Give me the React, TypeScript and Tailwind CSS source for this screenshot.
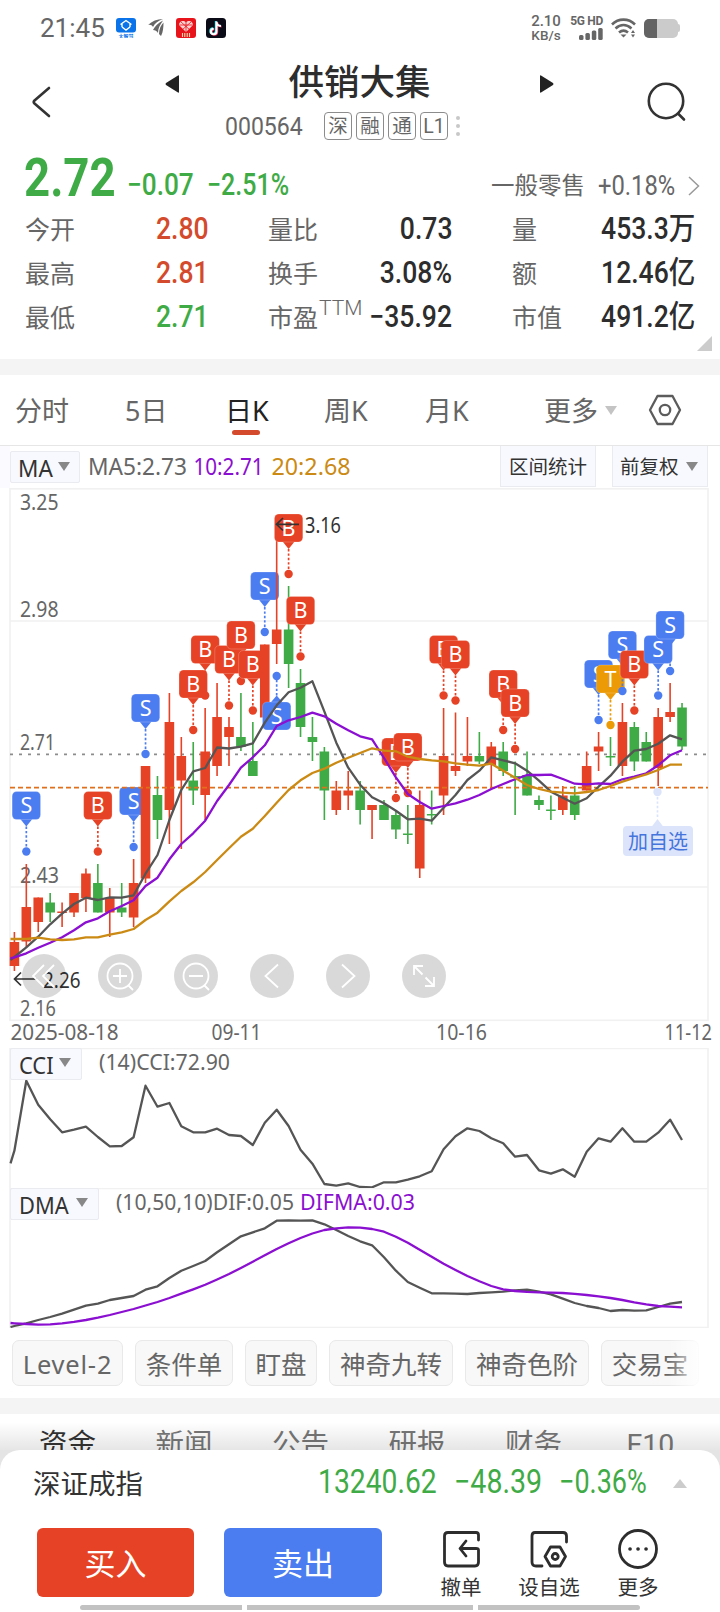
import React from 'react';

const RED = '#e64225';
const GREEN = '#3fab46';
const BLUE = '#4c7df0';
const AMBER = '#ec9a05';

const FIRST_X = 14.4;
const STEP = 11.922;
const xAt = (i: number) => FIRST_X + STEP * i;

interface Candle {
    up: boolean;
    high: number;
    top: number;
    bottom: number;
    low: number;
}

const c = (kind: 'r' | 'g', high: number, top: number, bottom: number, low: number): Candle => ({
    up: kind === 'r', high, top, bottom, low,
});

// chart coordinates: 4.88px per 0.01 yuan
const candles: Candle[] = [
    c('r', 932, 942, 966, 971), c('r', 864, 907, 941.5, 947), c('r', 897.5, 897.5, 922, 932),
    c('g', 893, 902.5, 912.5, 922), c('r', 902.5, 911.5, 913, 927), c('r', 893, 893, 912.5, 917),
    c('r', 868.5, 873.5, 898, 912), c('g', 864, 883, 912.5, 912.5), c('r', 888, 898, 912.5, 937),
    c('g', 883, 907.5, 912.5, 917), c('r', 859, 883, 917.5, 927), c('r', 766, 766, 878.5, 883),
    c('g', 776, 795, 820, 839), c('r', 693, 722, 810, 844), c('r', 737, 756, 780.5, 849),
    c('g', 742, 780.5, 790.5, 805), c('r', 708, 751.5, 795, 820), c('r', 683, 717, 766, 776),
    c('r', 717, 727, 737, 766), c('g', 693, 737, 747, 751), c('g', 722, 761, 776, 776),
    c('r', 644.5, 644.5, 717.5, 717.5), c('r', 526, 629.5, 644, 664), c('g', 586, 629.5, 664, 688),
    c('g', 669, 683, 727, 737), c('g', 717, 737, 742, 761), c('g', 747, 751.5, 790.5, 820),
    c('r', 781, 790.5, 810, 815), c('r', 771, 790.5, 795.5, 810), c('g', 781, 790.5, 810, 824.5),
    c('r', 805, 805, 810, 839), c('g', 800, 805, 820, 820), c('g', 810, 815, 829.5, 839),
    c('g', 805, 833.5, 835, 844), c('r', 790.5, 805, 868.5, 878), c('g', 790.5, 814, 815.5, 824.5),
    c('r', 708, 756, 795.5, 815), c('r', 712.5, 766, 771, 776), c('r', 717, 756, 761.5, 766),
    c('g', 732, 756, 761.5, 764), c('r', 742, 746.5, 765, 788), c('g', 742, 751.5, 771, 776),
    c('g', 761.5, 776, 777.5, 815), c('g', 751.5, 775, 795.5, 795.5), c('g', 795.5, 800, 805, 810),
    c('g', 795.5, 809.5, 811, 820), c('r', 786, 795.5, 810, 815), c('g', 786, 795.5, 815, 820),
    c('r', 751.5, 766, 790.5, 790.5), c('r', 732, 746.5, 751.5, 771), c('g', 737, 756, 757.5, 766),
    c('r', 703, 722, 766, 776), c('g', 722, 727, 761.5, 771), c('g', 732, 742, 761.5, 761.5),
    c('r', 708, 717, 768, 786), c('r', 683, 712, 717, 722), c('g', 703, 707.5, 746.5, 750),
];

interface Signal {
    kind: 'B' | 'S' | 'T';
    y: number;
    below?: boolean;
}

const signals: Record<number, Signal> = {
    1: { kind: 'S', y: 851.5 },
    7: { kind: 'B', y: 851.5 },
    10: { kind: 'S', y: 847 },
    11: { kind: 'S', y: 754 },
    15: { kind: 'B', y: 730 },
    16: { kind: 'B', y: 695.5 },
    18: { kind: 'B', y: 705.5 },
    19: { kind: 'B', y: 681 },
    20: { kind: 'B', y: 710.5 },
    21: { kind: 'S', y: 632 },
    22: { kind: 'S', y: 676, below: true },
    23: { kind: 'B', y: 574 },
    24: { kind: 'B', y: 656.5 },
    32: { kind: 'B', y: 798 },
    33: { kind: 'B', y: 793 },
    36: { kind: 'B', y: 695.5 },
    37: { kind: 'B', y: 700.5 },
    41: { kind: 'B', y: 730 },
    42: { kind: 'B', y: 749 },
    49: { kind: 'S', y: 720 },
    50: { kind: 'T', y: 725 },
    51: { kind: 'S', y: 691 },
    52: { kind: 'B', y: 710.5 },
    54: { kind: 'S', y: 695.5 },
    55: { kind: 'S', y: 671 },
};

const signalColor = { B: RED, S: BLUE, T: AMBER };

const ma5 = [957, 947.3, 936.7, 924.3, 913.7, 904, 897.7, 900, 897.3, 897.7, 895.3, 873.7, 855, 820, 790, 771.3, 768, 747.5, 748.5, 746.7, 743.3, 722.7, 705.3, 692.3, 687.7, 681.3, 711.7, 742.7, 767.7, 784.7, 797.3, 803.3, 810.7, 819.3, 818.7, 820.7, 807.7, 795, 780, 770.7, 757.3, 760.3, 763.3, 770.7, 780.7, 791.7, 797.7, 803.7, 798.3, 786.7, 775.7, 761.7, 750.7, 749, 743.7, 735.3, 739.3];
const ma10 = [957.3, 953.3, 947.7, 942.7, 937.3, 930.3, 922.3, 918.3, 911.3, 906, 900.3, 886, 877.7, 859.3, 844, 833.3, 820.7, 801, 785, 767.7, 757.3, 745.3, 726, 720.3, 717, 712.7, 716.3, 723.7, 730.3, 736.3, 739.3, 758, 777.3, 794, 802, 808.7, 806, 803.3, 799.7, 795, 789, 784, 779.3, 775, 775, 774.7, 779, 783.7, 784.3, 783.3, 784, 779.3, 776.7, 773.3, 765.3, 755.3, 750.3];
const ma20 = [939, 939, 937.7, 939.3, 940, 939.3, 937.3, 937.3, 934.7, 932.3, 929, 920, 912.7, 901.3, 891, 882.3, 872, 860, 848.3, 836.7, 828.7, 816, 802.7, 790, 780.3, 773, 768.7, 762.7, 757.7, 753, 748.3, 750.7, 751.3, 756.7, 759, 760.3, 761.3, 763.3, 764.7, 765.7, 763.7, 770.7, 777.7, 785, 789, 791.7, 792.7, 793.3, 792, 790, 786, 781.7, 778, 774.3, 770, 764.7, 764.7];
const cci = [1150.7, 1080.7, 1104.7, 1119.3, 1132.3, 1129.7, 1126.7, 1137, 1146.3, 1146, 1137.3, 1085.7, 1106.7, 1103, 1126.3, 1132.3, 1132.3, 1128.7, 1135, 1136, 1145, 1122.7, 1109.7, 1126, 1149.7, 1163.7, 1184, 1185.7, 1183.3, 1187, 1187.3, 1182.3, 1182.3, 1179.7, 1176.3, 1171.3, 1149.3, 1136.3, 1128.3, 1131, 1138.3, 1143.3, 1156.7, 1155, 1170.3, 1173.7, 1169.3, 1176.7, 1151.7, 1138.3, 1141.7, 1128.3, 1141.7, 1141.7, 1132.7, 1119.7, 1140];
const dif = [1326, 1323.3, 1320, 1317, 1313.7, 1309.7, 1305.7, 1303.7, 1300, 1298, 1296, 1289.7, 1286.3, 1278, 1270.7, 1266, 1261, 1252.3, 1244.3, 1236.3, 1232.3, 1228.3, 1220.7, 1220.3, 1220.7, 1220.3, 1224.3, 1230, 1236, 1241.3, 1245.3, 1257.3, 1270.7, 1282, 1287.7, 1293.3, 1293.3, 1293.7, 1294, 1293, 1292.3, 1291.7, 1290.3, 1289.7, 1291.7, 1294.3, 1298.7, 1303, 1306, 1308, 1311, 1310, 1310.7, 1310.3, 1307, 1303.7, 1302];
const difma = [1323.3, 1324, 1324.7, 1324.3, 1323.3, 1321.8, 1320, 1317.7, 1315, 1312, 1309, 1305.5, 1302, 1298, 1293.7, 1289.3, 1284.7, 1279.5, 1274, 1268, 1261.7, 1255.3, 1249, 1243.3, 1238, 1233.5, 1230, 1228.3, 1227.3, 1227.7, 1229, 1231.7, 1236.7, 1242.7, 1249.7, 1256.7, 1263.7, 1270, 1276, 1281.3, 1286, 1289.3, 1291, 1291.8, 1292.3, 1292.7, 1293, 1293.8, 1295, 1296.3, 1298, 1300, 1302.3, 1304.3, 1306, 1306.7, 1307.3];

const toPoints = (values: number[], startY: number) =>
    [`10.5,${startY}`, ...values.map((y, i) => `${xAt(i).toFixed(1)},${y}`)].join(' ');

interface LineProps {
    values: number[];
    startY: number;
    color: string;
}

const Line: React.FC<LineProps> = ({ values, startY, color }) => (
    <polyline points={toPoints(values, startY)} fill="none" stroke={color} strokeWidth={2.3} strokeLinejoin="round" />
);

interface LabelProps {
    x: number;
    y: number;
    w: number;
    size?: number;
    color?: string;
    children: string;
}

const Label: React.FC<LabelProps> = ({ x, y, w, size = 22, color = '#666', children }) => (
    <text x={x} y={y} fontSize={size} fill={color} textLength={w} lengthAdjust="spacingAndGlyphs">{children}</text>
);

const SignalTag: React.FC<{ x: number; signal: Signal }> = ({ x, signal }) => {
    const { kind, y, below } = signal;
    const color = signalColor[kind];
    const boxY = below ? y + 26 : y - 60;
    const edge = below ? boxY + 0.5 : boxY + 27.5;
    const tip = below ? boxY - 6.5 : boxY + 35;
    return (
        <g>
            <line x1={x} x2={x} y1={tip} y2={y} stroke={color} strokeWidth={1.7} strokeDasharray="2.4 2" />
            <circle cx={x} cy={y} r={4.2} fill={color} />
            <polygon points={`${x - 6},${edge} ${x + 6},${edge} ${x},${tip}`} fill={color} />
            <rect x={x - 14.2} y={boxY} width={28.4} height={28} rx={4.5} fill={color} stroke="#fff" strokeOpacity={0.35} strokeWidth={0.6} />
            <text x={x} y={boxY + 21.8} fontSize={21.5} textAnchor="middle" fill="#fff">{kind}</text>
        </g>
    );
};

const CandleBar: React.FC<{ x: number; candle: Candle }> = ({ x, candle }) => {
    const color = candle.up ? RED : GREEN;
    return (
        <g fill={color}>
            <rect x={x - 0.8} y={candle.high} width={1.6} height={candle.low - candle.high} />
            <rect x={x - 4.8} y={candle.top} width={9.6} height={candle.bottom - candle.top} />
        </g>
    );
};

const chartFont = "font-['Noto_Sans','Noto_Sans_CJK_SC',sans-serif]";

const PriceChart = () => (
    <svg className={`block ${chartFont}`} width="720" height="560" viewBox="0 488 720 560">
        <g fill="none" stroke="#f1f1f2" strokeWidth={1.6}>
            <rect x="10" y="488.8" width="698" height="531.5" />
            <path d="M10 621H708M10 887H708" />
        </g>
        <Label x={20} y={510} w={38.5}>3.25</Label>
        <Label x={20} y={617} w={38.5}>2.98</Label>
        <Label x={20} y={750} w={35}>2.71</Label>
        <Label x={20} y={883} w={39}>2.43</Label>
        <Label x={20} y={1016} w={36}>2.16</Label>
        <path d="M10 754.3H708" stroke="#8c8c8c" strokeWidth={1.7} strokeDasharray="3 6" />
        {candles.map((candle, i) => (
            <g key={i}>
                <CandleBar x={xAt(i)} candle={candle} />
                {signals[i] && <SignalTag x={xAt(i)} signal={signals[i]} />}
            </g>
        ))}
        <path d="M10 787.6H708" stroke="#e0701c" strokeWidth={1.9} strokeDasharray="5 3" />
        <Line values={ma5} startY={960} color="#555" />
        <Line values={ma10} startY={958.3} color="#8b0fd0" />
        <Line values={ma20} startY={939} color="#cb8a14" />

        <g fill="#dbe4fb">
            <circle cx="657.5" cy="792" r="4.2" />
            <path d="M657.5 797V819" stroke="#dbe4fb" strokeWidth={1.7} strokeDasharray="2.4 2" />
            <path d="M651.500 827L657.500 819L663.500 827Z" />
            <rect x="623" y="826" width="70" height="30" rx="4" />
        </g>
        <text x="628" y="849" fontSize="20" fill="#4574dc" textLength="60">加自选</text>

        <g fill="none" stroke="#333" strokeWidth={1.7}>
            <path d="M299 524.3H276.5M283 518L276.5 524.3L283 530.5" />
            <path d="M37 979H14.5M21 972.5L14.5 979L21 985.5" />
        </g>
        <Label x={305} y={533} w={36} size={21.5} color="#333">3.16</Label>
        <Label x={43} y={987.5} w={37.5} size={21.5} color="#333">2.26</Label>

        <Label x={10.5} y={1040} w={108}>2025-08-18</Label>
        <Label x={211.5} y={1040} w={50}>09-11</Label>
        <Label x={436} y={1040} w={51}>10-16</Label>
        <Label x={664.5} y={1040} w={47.5}>11-12</Label>
    </svg>
);

const Down = ({ className = '' }: { className?: string }) => (
    <svg className={`shrink-0 ${className}`} width="12" height="9" viewBox="0 0 12 9" fill="currentColor">
        <path d="M0 0H12L6 9Z" />
    </svg>
);

interface NavButtonProps {
    children: React.ReactNode;
}

const NavButton: React.FC<NavButtonProps> = ({ children }) => (
    <button className="size-11 rounded-full bg-black/15">
        <svg width="44" height="44" viewBox="0 0 44 44" fill="none" stroke="#fff" strokeWidth={1.8}>
            {children}
        </svg>
    </button>
);

const ChartNav = () => (
    <div className="absolute left-[22px] top-[466px] flex gap-8">
        <NavButton><path d="M22 11L11 22L22 33M32 11L21 22L32 33" /></NavButton>
        <NavButton>
            <circle cx="22" cy="22" r="12.5" />
            <path d="M15 22H29M22 15V29M30 31L35 36" />
        </NavButton>
        <NavButton>
            <circle cx="22" cy="22" r="12.5" />
            <path d="M15 22H29M30 31L35 36" />
        </NavButton>
        <NavButton><path d="M28 10.500L15.500 22L28 33.500" /></NavButton>
        <NavButton><path d="M16 10.500L28.500 22L16 33.500" /></NavButton>
        <NavButton>
            <path d="M20.500 20.500L12 12M12 21V12H21M23.500 23.500L32 32M32 23V32H23" />
        </NavButton>
    </div>
);

interface IndicatorTagProps {
    name: string;
    className: string;
}

const IndicatorTag: React.FC<IndicatorTagProps> = ({ name, className }) => (
    <div className={`absolute left-[10px] top-0 flex h-8 items-center justify-between rounded-[2px] border border-[#e9ebf0] bg-[#f8f9fe] pl-[8px] pr-[10px] font-['Noto_Sans',sans-serif] text-[23px] leading-8 text-[#333] ${className}`}>
        <span className="w-[40px] origin-left scale-x-[0.95] pt-[1px]">{name}</span>
        <Down className="-mt-[3px] text-[#888]" />
    </div>
);

const CciPanel = () => (
    <div className="relative h-[140px]">
        <svg className={`block ${chartFont}`} width="720" height="140" viewBox="0 1048 720 140">
            <path d="M10 1188V1048.500H708V1188" fill="none" stroke="#f1f1f2" strokeWidth={1.6} />
            <Label x={99} y={1070} w={131}>(14)CCI:72.90</Label>
            <Line values={cci} startY={1163.3} color="#555" />
        </svg>
        <IndicatorTag name="CCI" className="w-[72px]" />
    </div>
);

const DmaPanel = () => (
    <div className="relative h-[140px]">
        <svg className={`block ${chartFont}`} width="720" height="140" viewBox="0 1188 720 140">
            <rect x="10" y="1188.500" width="698" height="139" fill="none" stroke="#f1f1f2" strokeWidth={1.6} />
            <Label x={116} y={1210} w={178}>(10,50,10)DIF:0.05</Label>
            <Label x={300} y={1210} w={115} color="#8b0fd0">DIFMA:0.03</Label>
            <Line values={dif} startY={1327} color="#555" />
            <Line values={difma} startY={1323} color="#8b0fd0" />
        </svg>
        <IndicatorTag name="DMA" className="w-[89px]" />
    </div>
);

const StatusBar = () => (
    <div className="flex h-14 items-center justify-between pl-[40px] pr-[40px] text-[#666]">
        <div className="flex items-center">
            <span className="w-[76px] origin-left text-[26px]">21:45</span>
            <svg width="20" height="20" viewBox="0 0 20 20">
                <rect width="20" height="14.500" rx="3" fill="#0a73ea" />
                <path d="M4.500 6.500L10 2.500L15.500 6.500M6 9L10 12L14 9M6 6V9M14 6V9" fill="none" stroke="#fff" strokeWidth={1.4} />
                <text x="10" y="19.500" fontSize="5" fontWeight="700" textAnchor="middle" fill="#0a73ea">大智慧</text>
            </svg>
            <svg className="ml-3" width="16" height="18" viewBox="0 0 16 18" fill="#666">
                <path d="M0 6C4 2 9 0 15 0C10 2 7 4 5 8C4 6 2 5.500 0 6Z" />
                <path d="M5 11C7 7 10 4 15 1.500C12 6 10 9 10 14C9 12 7 11 5 11Z" />
                <path d="M11 15C11 10 13 6 15.500 3.500C15.500 9 15 13 13 17Z" />
            </svg>
            <svg className="ml-3" width="20" height="20" viewBox="0 0 20 20">
                <rect width="20" height="20" rx="3" fill="#e8141c" />
                <path d="M10 14L3.500 7.500C2 4 7 1 10 4.500C13 1 18 4 16.500 7.500Z" fill="#fbd3d1" />
                <path d="M5 4L14 12M15 4L6 12M10 4V14M4 7H16" stroke="#e8141c" strokeWidth={0.8} />
                <path d="M6.500 19V15M8.800 19V15M11.200 19V15M13.500 19V15" stroke="#ffd9a8" strokeWidth={1.1} />
            </svg>
            <svg className="ml-[10px]" width="20" height="20" viewBox="0 0 20 20">
                <rect width="20" height="20" rx="3.500" fill="#0b0b18" />
                <g fill="none" strokeWidth={2}>
                    <path d="M9.800 3V13A2.800 2.800 0 1 1 7 10.200M9.800 3.500C10 6 12 7.500 14.500 7.500" stroke="#27e0e4" />
                    <path d="M11.200 4V14A2.800 2.800 0 1 1 8.400 11.200M11.200 4.500C11.500 7 13.500 8.500 15.500 8.500" stroke="#f5305a" />
                    <path d="M10.500 3.500V13.500A2.800 2.800 0 1 1 7.700 10.700M10.500 4C10.800 6.500 12.800 8 15 8" stroke="#fff" />
                </g>
            </svg>
        </div>
        <div className="flex items-center">
            <div className="w-[32px] text-center text-[15px] font-medium leading-[12px]">
                <div className="pb-[2px]">2.10</div>
                <div className="text-[13.500px]">KB/s</div>
            </div>
            <div className="ml-2 flex w-[33px] flex-col items-end">
                <span className="whitespace-nowrap text-[12px] font-bold leading-[11px] tracking-tight">5G HD</span>
                <svg className="mt-[1px]" width="24" height="12" viewBox="0 0 24 12" fill="#666">
                    <rect x="0" y="7" width="4.500" height="5" rx="1.500" />
                    <rect x="6.400" y="5" width="4.500" height="7" rx="1.500" />
                    <rect x="12.800" y="2.500" width="4.500" height="9.500" rx="1.500" />
                    <rect x="19.200" y="0" width="4.500" height="12" rx="1.500" />
                </svg>
            </div>
            <svg className="ml-[8px]" width="26" height="20" viewBox="0 0 26 20" fill="none" stroke="#666" strokeWidth={2.6}>
                <path d="M1 6.500C7.500 0 17.500 0 24 6.500M4.500 10.500C9.500 6 15.500 6 20.500 10.500M8 14.500C11 12 14 12 17 14.500" />
                <path d="M9.500 16.500H15.500L12.500 19.500Z" fill="#666" stroke="none" />
                <path d="M20 15L22 12L24 15ZM20 16.500L22 19.500L24 16.500Z" fill="#666" stroke="none" />
            </svg>
            <div className="ml-[7px] flex items-center">
                <div className="flex h-[19px] w-[34px] overflow-hidden rounded-[5px] bg-[#cbcbcb]">
                    <div className="w-[13px] bg-[#636363]" />
                </div>
                <div className="h-2 w-[2px] rounded-r bg-[#cbcbcb]" />
            </div>
        </div>
    </div>
);

const tags = ['深', '融', '通', 'L1'];

const TitleBar = () => (
    <header className="flex h-[94px] items-start pl-[31px] pr-[33px]">
        <svg className="mt-[30px]" width="20" height="32" viewBox="0 0 20 32" fill="none" stroke="#333" strokeWidth={2.6} strokeLinecap="round" strokeLinejoin="round">
            <path d="M18 2L3.500 14.500Q2 16 3.500 17.500L18 30" />
        </svg>
        <div className="ml-[114px] mr-auto w-[389px]">
            <div className="flex h-[50px] items-center justify-between">
                <svg className="mt-[6px]" width="15" height="18" viewBox="0 0 15 18" fill="#222"><path d="M14 1V17Q14 18 13 17.500L1 10Q0 9 1 8L13 .5Q14 0 14 1Z" /></svg>
                <h1 className="pt-[5px] text-[35.500px] font-medium leading-none text-[#2d2d2d]">供销大集</h1>
                <svg className="mt-[6px]" width="15" height="18" viewBox="0 0 15 18" fill="#222"><path d="M1 1V17Q1 18 2 17.500L14 10Q15 9 14 8L2 .5Q1 0 1 1Z" /></svg>
            </div>
            <div className="flex h-[39px] items-center pl-[60px] text-[#666]">
                <span className="w-[99px] origin-left scale-x-[0.87] text-[26.500px]">000564</span>
                <div className="flex gap-1">
                    {tags.map((tag) => (
                        <span key={tag} className="flex size-[28px] items-center justify-center rounded-[4px] border border-[#8c8c8c] pt-[2px] text-[19.500px] leading-none">{tag}</span>
                    ))}
                </div>
                <div className="ml-[8px] flex flex-col gap-[4px]">
                    <i className="size-1 rounded-full bg-[#c8c8c8]" />
                    <i className="size-1 rounded-full bg-[#c8c8c8]" />
                    <i className="size-1 rounded-full bg-[#c8c8c8]" />
                </div>
            </div>
        </div>
        <svg className="mt-[26px]" width="40" height="40" viewBox="0 0 40 40" fill="none" stroke="#333" strokeWidth={2.6} strokeLinecap="round">
            <circle cx="19" cy="19" r="17.200" />
            <path d="M31.500 32L37 37.500" />
        </svg>
    </header>
);

interface Stat {
    label: string;
    value: string;
    color?: string;
    sup?: string;
}

const statRows: Stat[][] = [
    [{ label: '今开', value: '2.80', color: 'text-[#d44a2c]' }, { label: '量比', value: '0.73' }, { label: '量', value: '453.3万' }],
    [{ label: '最高', value: '2.81', color: 'text-[#d44a2c]' }, { label: '换手', value: '3.08%' }, { label: '额', value: '12.46亿' }],
    [{ label: '最低', value: '2.71', color: 'text-[#3fab46]' }, { label: '市盈', value: '−35.92', sup: 'TTM' }, { label: '市值', value: '491.2亿' }],
];

const statCols = ['w-[243px]', 'w-[184px]', 'ml-[60px] w-[183px]'];

const Quote = () => (
    <section className="relative h-[209px] pl-[25px] pr-[24px]">
        <div className="flex h-[57px] items-end whitespace-nowrap">
            <span className="-ml-px w-[103px] origin-left scale-x-[0.86] text-[53px] font-bold leading-[57px] text-[#3fab46]">2.72</span>
            <span className="w-[80px] origin-left scale-x-[0.86] text-[30.500px] font-medium leading-[45px] text-[#3fab46]">−0.07</span>
            <span className="origin-left scale-x-[0.82] text-[30.500px] font-medium leading-[45px] text-[#3fab46]">−2.51%</span>
            <div className="ml-auto mr-[-4px] flex w-[209px] items-center pb-[4px] leading-[34px] text-[#666]">
                <span className="w-[108px] text-[23.500px]">一般零售</span>
                <span className="w-[90px] origin-left scale-x-[0.88] text-[27px]">+0.18%</span>
                <svg className="shrink-0" width="12" height="20" viewBox="0 0 12 20" fill="none" stroke="#999" strokeWidth={1.5}><path d="M1 1L10.500 10L1 19" /></svg>
            </div>
        </div>
        {statRows.map((row, i) => (
            <div key={i} className="flex h-[44px] items-center">
                {row.map((s, j) => (
                    <div key={s.label} className={`flex items-center whitespace-nowrap ${statCols[j]}`}>
                        <span className={j === 0 ? 'relative w-[131px] pt-[4px] text-[25px] text-[#666]' : 'relative pt-[4px] text-[25px] text-[#666]'}>
                            {s.label}
                            {s.sup && <sup className="absolute left-[51px] top-[2px] text-[21px] font-light leading-none">{s.sup}</sup>}
                        </span>
                        <span className={j === 0 ? `origin-left scale-x-[0.87] text-[30.500px] font-medium ${s.color}` : 'ml-auto origin-right scale-x-[0.87] text-[30.500px] font-medium text-[#2d2d2d]'}>{s.value}</span>
                    </div>
                ))}
            </div>
        ))}
        <svg className="absolute bottom-[8px] right-[8px]" width="15" height="15" viewBox="0 0 15 15" fill="#ccc"><path d="M15 0V15H0Z" /></svg>
    </section>
);

const periods = [
    { name: '分时', className: 'w-[110px]' },
    { name: '5日', className: 'w-[100px]' },
    { name: '日K', className: 'w-[99px]' },
    { name: '周K', className: 'w-[101px]' },
    { name: '月K', className: 'w-[119px]' },
];

const PeriodTabs = () => (
    <nav className="flex h-[71px] items-center border-b border-[#e6e6e6] pl-[15px] font-['Noto_Sans','Noto_Sans_CJK_SC',sans-serif] text-[27px] text-[#666]">
        {periods.map((p) => (
            <div key={p.name} className={`pt-[3px] ${p.className}`}>
                <span className={p.name === '日K' ? 'relative text-[#222]' : 'relative'}>
                    {p.name}
                    {p.name === '日K' && <i className="absolute -bottom-[6px] left-[7px] h-[5px] w-7 rounded-full bg-[#d44a2c]" />}
                </span>
            </div>
        ))}
        <span className="pt-[3px]">更多</span>
        <Down className="ml-[7px] text-[#c4c4c4]" />
        <svg className="ml-[31px]" width="34" height="32" viewBox="0 0 34 32" fill="none" stroke="#5c5c5c" strokeWidth={2.3} strokeLinejoin="round">
            <path d="M9.500 2H24.500L32 16L24.500 30H9.500L2 16Z" />
            <circle cx="17" cy="16" r="5.200" />
        </svg>
    </nav>
);

const MaToolbar = () => (
    <div className="flex h-[42px] items-start whitespace-nowrap">
        <div className="h-[42px] w-[10px] bg-[#fafaff]" />
        <div className="mt-[5px] flex h-8 w-[70px] items-center justify-between rounded-[2px] border border-[#e9ebf0] bg-[#f8f9fe] pl-[7px] pr-[9px] font-['Noto_Sans',sans-serif] text-[23px] leading-8 text-[#333]">
            <span className="w-[36px] origin-left scale-x-[0.98] pt-[1px]">MA</span>
            <Down className="-mt-[2px] text-[#888]" />
        </div>
        <svg className={chartFont} width="300" height="40" viewBox="80 446 300 40">
            <Label x={88} y={474.5} w={99} size={23}>MA5:2.73</Label>
            <Label x={193.500} y={474.5} w={70} size={23} color="#8b0fd0">10:2.71</Label>
            <Label x={271.500} y={474.5} w={79} size={23} color="#cb8a14">20:2.68</Label>
        </svg>
        <button className="ml-[120px] h-[41px] w-[96px] border border-t-0 border-[#e9ebf0] bg-[#f8f9fe] pt-[3px] text-[19.500px] text-[#333]">区间统计</button>
        <button className="ml-4 flex h-[41px] w-[96px] items-center border border-t-0 border-[#e9ebf0] bg-[#f8f9fe] pl-[7px] text-[19.500px] text-[#333]">
            <span className="pt-[3px]">前复权</span>
            <Down className="ml-[7px] text-[#888]" />
        </button>
    </div>
);

const tools = [
    { name: 'Level-2', className: 'w-[111px]' },
    { name: '条件单', className: 'w-[98px]' },
    { name: '盯盘', className: 'w-[72px]' },
    { name: '神奇九转', className: 'w-[124px]' },
    { name: '神奇色阶', className: 'w-[124px]' },
    { name: '交易宝', className: 'w-[98px]' },
];

const ToolChips = () => (
    <div className="relative flex h-[70px] gap-[12px] pl-[12px] pt-[12px] font-['Noto_Sans','Noto_Sans_CJK_SC',sans-serif]">
        {tools.map((t) => (
            <button key={t.name} className={`flex h-[46px] shrink-0 items-center justify-center whitespace-nowrap rounded-[7px] border border-[#e9e9e9] bg-[#f8f8f8] pt-[3px] text-[25.500px] text-[#666] ${t.className}`}>
                {t.name === 'Level-2' ? <span className="tracking-[0.8px]">{t.name}</span> : t.name}
            </button>
        ))}
        <div className="absolute right-[16px] top-0 h-full w-9 bg-linear-to-r from-white/0 to-white" />
    </div>
);

const infoTabs = ['资金', '新闻', '公告', '研报', '财务', 'F10'];

const InfoTabs = () => (
    <div className="relative flex h-[36px] overflow-hidden pl-[39px] text-[28.500px] leading-[62px] text-[#777]">
        {infoTabs.map((t) => (
            <span key={t} className={t === '资金' ? 'w-[116.500px] shrink-0 text-[#333]' : t === 'F10' ? 'shrink-0 pl-[5px]' : 'w-[116.500px] shrink-0'}>{t}</span>
        ))}
        <div className="absolute inset-x-0 bottom-0 h-7 bg-linear-to-b from-black/0 to-black/10" />
    </div>
);

interface ActionProps {
    label: string;
    className: string;
    children: React.ReactNode;
}

const Action: React.FC<ActionProps> = ({ label, className, children }) => (
    <button className={`flex flex-col items-center ${className}`}>
        <svg width="42" height="42" viewBox="0 0 42 42" fill="none" stroke="#2d2d2d" strokeWidth={2.8} strokeLinecap="round" strokeLinejoin="round">
            {children}
        </svg>
        <span className="mt-[6px] whitespace-nowrap text-[20.500px] leading-[24px] text-[#333]">{label}</span>
    </button>
);

const BottomSheet = () => (
    <footer className="relative h-[162px] bg-[#e4e4e4]">
        <div className="h-full rounded-t-[20px] bg-white">
            <div className="flex h-[66px] items-center whitespace-nowrap pl-[33px] pr-[33px]">
                <span className="w-[285px] pt-[3px] text-[27.500px] text-[#333]">深证成指</span>
                <div className="flex pb-px text-[32.500px] text-[#3fab46]">
                    <span className="w-[136px] origin-left scale-x-[0.87]">13240.62</span>
                    <span className="w-[105px] origin-left scale-x-[0.88]">−48.39</span>
                    <span className="w-[90px] origin-left scale-x-[0.83]">−0.36%</span>
                </div>
                <svg className="ml-auto" width="14" height="9" viewBox="0 0 14 9" fill="#ccc"><path d="M0 9H14L7 0Z" /></svg>
            </div>
            <div className="flex h-[89px] items-start pl-[37px] pt-[12px]">
                <button className="h-[69px] w-[157px] rounded-[6px] bg-[#e64225] pt-[5px] text-[31px] text-white">买入</button>
                <button className="ml-[30px] h-[69px] w-[158px] rounded-[6px] bg-[#4c7df0] pt-[5px] text-[31px] text-white">卖出</button>
                <Action label="撤单" className="ml-[50px] w-[58px]">
                    <path d="M38.500 12V7Q38.500 4.500 36 4.500H8Q4.500 4.500 4.500 8V34Q4.500 38 8 38H35Q38.500 38 38.500 34V22Q38.500 20.500 36 20.500H21M26 13L20 20.500L26 28" />
                </Action>
                <Action label="设自选" className="ml-[24px] w-[70px]">
                    <path d="M38.500 14V8Q38.500 4.500 35 4.500H7Q4 4.500 4 8V34Q4 38 8 38H14" />
                    <path d="M22.500 19H32L37.500 28.500L32 38H22.500L17 28.500Z" />
                    <circle cx="27.200" cy="28.500" r="3" />
                </Action>
                <Action label="更多" className="ml-[25px] w-[58px]">
                    <circle cx="21" cy="21" r="18.500" />
                    <path d="M13 21H13.100M21 21H21.100M29 21H29.100" strokeWidth={3.600} />
                </Action>
            </div>
            <div className="mx-auto flex h-[5px] w-[560px] gap-[5px] overflow-hidden rounded-full">
                <i className="w-[162px] bg-[#c2c2c2]" />
                <i className="flex-1 bg-[#c2c2c2]" />
                <i className="w-[162px] bg-[#c2c2c2]" />
            </div>
        </div>
    </footer>
);

export default function App() {
    return (
        <div className="flex h-[1612px] w-[720px] flex-col overflow-hidden bg-white font-[Roboto,'Noto_Sans_CJK_SC',sans-serif]">
            <StatusBar />
            <TitleBar />
            <Quote />
            <div className="h-4 shrink-0 bg-[#f4f4f4]" />
            <PeriodTabs />
            <MaToolbar />
            <div className="relative">
                <PriceChart />
                <ChartNav />
            </div>
            <CciPanel />
            <DmaPanel />
            <ToolChips />
            <div className="h-4 shrink-0 bg-[#f4f4f4]" />
            <InfoTabs />
            <BottomSheet />
        </div>
    );
}
